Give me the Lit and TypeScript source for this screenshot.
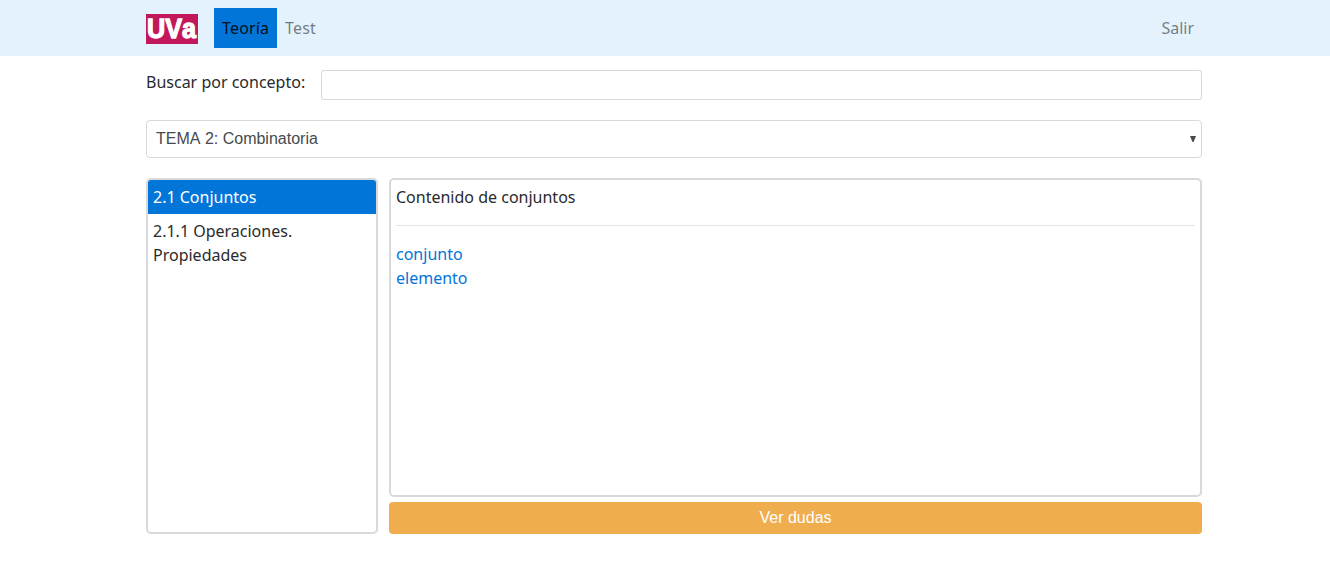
import { LitElement, html, css } from "lit";
import { customElement, state } from "lit/decorators.js";

@customElement("app-root")
export class AppRoot extends LitElement {
  static styles = css`
    :host { display: block; font: 16px/24px "Noto Sans", sans-serif; color: #292b2c; background: #fff; }
    *, *::before { box-sizing: border-box; }
    a { text-decoration: none; }
    nav { height: 56px; background: #e3f2fd; padding: 8px 128px 8px 146px; }
    .bar { display: flex; align-items: center; height: 40px; }
    .logo { width: 52px; height: 30px; margin: 2px 16px 0 0; display: block; overflow: visible; }
    .logo text { font: bold 27px "Liberation Sans", sans-serif; font-kerning: none; fill: #fff; stroke: #fff; stroke-width: 1.3px; }
    .link { padding: 8px; color: rgba(0, 0, 0, 0.5); }
    .link.active { width: 63px; background: #0275d8; color: rgba(0, 0, 0, 0.9); }
    .link:not(.right) { letter-spacing: 0.18px; }
    .right { margin-left: auto; }
    main { padding: 14px 128px 0 146px; }
    .search { display: flex; height: 30px; }
    .search label { width: 175px; white-space: nowrap; }
    .search input { flex: 1; min-width: 0; height: 30px; border: 1px solid rgba(0, 0, 0, 0.15); border-radius: 3.2px; padding: 4px 8px; background: #fff; outline: 0; }
    .select { display: flex; justify-content: space-between; align-items: center; margin-top: 20px; height: 38px; padding: 0 5px 0 9px; border: 1px solid rgba(0, 0, 0, 0.15); border-radius: 4px; font-family: "Liberation Sans", sans-serif; color: #464a4c; font-kerning: none; }
    .arrow { width: 6px; height: 6px; margin-top: -1px; display: block; fill: #464a4c; }
    .cols { display: grid; grid-template-columns: 232px 813px; column-gap: 11px; margin-top: 20px; height: 356px; }
    .box { border: 2px solid #d9d9d9; border-radius: 5px; }
    .item { padding: 5px; }
    .item.active { background: #0275d8; color: #fff; }
    .item:first-child { border-radius: 3px 3px 0 0; }
    .detail { display: flex; flex-direction: column; gap: 5px; }
    .content { height: 319px; padding: 5px; }
    .content hr { margin: 16px 0; border: 0; border-top: 1px solid rgba(0, 0, 0, 0.1); }
    .content a { display: block; color: #0275d8; }
    button { height: 32px; border: 0; border-radius: 4px; background: #f0ad4e; color: #fff; font: 16px/24px "Liberation Sans", sans-serif; padding: 0; }
  `;

  @state() private topics = ["2.1 Conjuntos", "2.1.1 Operaciones. Propiedades"];
  @state() private concepts = ["conjunto", "elemento"];

  render() {
    return html`
      <nav><div class="bar">
        <svg class="logo" viewBox="0 0 52 30"><rect width="52" height="30" fill="#c2185b"/><text x="1" y="23.5" textLength="49" lengthAdjust="spacingAndGlyphs">UVa</text></svg>
        <a class="link active">Teoría</a><a class="link">Test</a><a class="link right">Salir</a>
      </div></nav>
      <main>
        <div class="search"><label for="q">Buscar por concepto:</label><input id="q" /></div>
        <div class="select" role="combobox"><span>TEMA 2: Combinatoria</span><svg class="arrow" viewBox="0 0 6 6"><path d="M0 0h6L3.5 6h-1z"/></svg></div>
        <div class="cols">
          <div class="box list">${this.topics.map((t, i) => html`<div class="item ${i === 0 ? "active" : ""}">${t}</div>`)}</div>
          <div class="detail">
            <div class="box content"><div>Contenido de conjuntos</div><hr />${this.concepts.map((c) => html`<a>${c}</a>`)}</div>
            <button>Ver dudas</button>
          </div>
        </div>
      </main>`;
  }
}
